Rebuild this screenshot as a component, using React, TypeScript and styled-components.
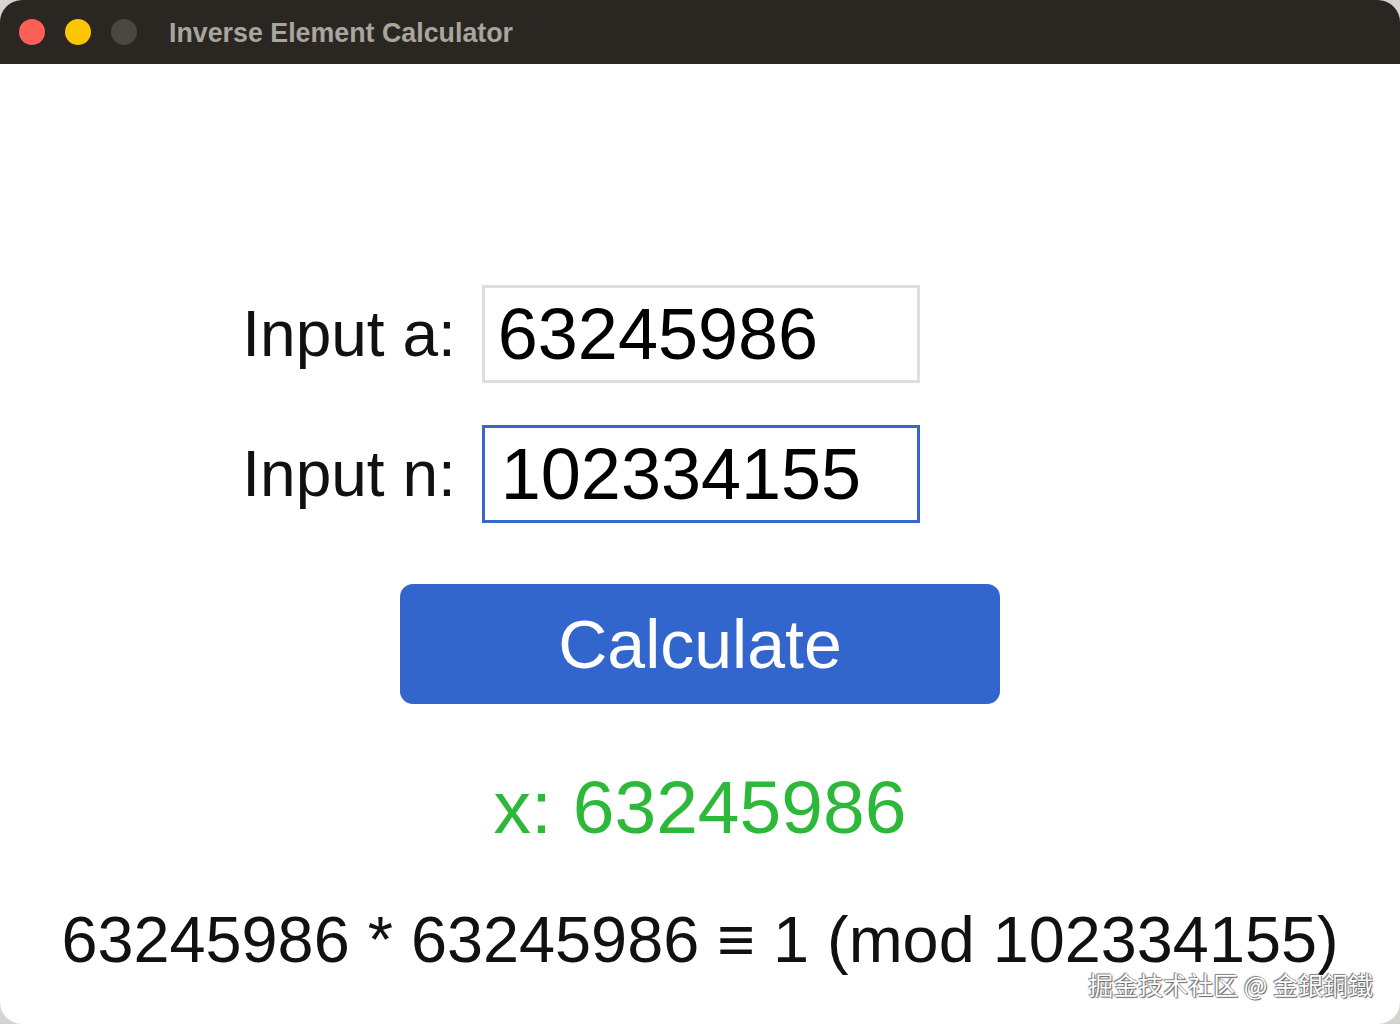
import * as React from "react";
import styled, { createGlobalStyle } from "styled-components";

const GlobalStyle = createGlobalStyle`
  html, body {
    margin: 0;
    padding: 0;
    background: #d6d4d0;
  }
  body {
    font-family: "Liberation Sans", Arial, sans-serif;
  }
`;

const Window = styled.div`
  width: 1400px;
  height: 1024px;
  display: flex;
  flex-direction: column;
  background: #ffffff;
  border-radius: 22px;
  overflow: hidden;
  position: relative;
`;

const TitleBar = styled.div`
  height: 64px;
  flex-shrink: 0;
  display: flex;
  align-items: center;
  padding-left: 19px;
  background: #2a2622;
`;

const Lights = styled.div`
  display: flex;
  gap: 20px;
  margin-right: 32px;
`;

interface ILightProps {
  color: string;
}

const Light = styled.span<ILightProps>`
  width: 26px;
  height: 26px;
  border-radius: 50%;
  background: ${props => props.color};
`;

const Title = styled.div`
  font-family: "Liberation Sans", Arial, sans-serif;
  font-weight: 700;
  font-size: 26.8px;
  color: #a9a49d;
  margin-top: 2px;
`;

const Body = styled.div`
  flex: 1;
  display: flex;
  flex-direction: column;
  align-items: center;
  padding-top: 221px;
`;

const Form = styled.div`
  display: grid;
  grid-template-columns: auto 438px;
  column-gap: 26px;
  row-gap: 42px;
  align-items: center;
  padding-right: 238px;
`;

const Label = styled.label`
  font-size: 64px;
  line-height: 64px;
  color: #111;
  text-align: right;
`;

interface IFieldProps {
  focused?: boolean;
}

const Field = styled.input<IFieldProps>`
  box-sizing: border-box;
  width: 438px;
  height: 98px;
  margin: 0;
  padding: 0 ${props => (props.focused ? "16px" : "13px")};
  font-family: "Liberation Sans", Arial, sans-serif;
  font-size: 72px;
  color: #000;
  background: #fff;
  border: 3px solid ${props => (props.focused ? "#3b66c9" : "#dedede")};
  border-radius: 0;
  outline: none;
`;

const CalcButton = styled.button`
  margin-top: 61px;
  width: 600px;
  height: 120px;
  border: none;
  border-radius: 13px;
  background: #3366cc;
  color: #ffffff;
  font-family: "Liberation Sans", Arial, sans-serif;
  font-size: 68px;
  line-height: 68px;
  padding: 0;
  cursor: pointer;
`;

const Result = styled.div`
  margin-top: 66px;
  font-size: 75px;
  line-height: 75px;
  color: #2eb83a;
`;

const Equation = styled.div`
  margin-top: 63px;
  font-size: 64.8px;
  line-height: 64px;
  color: #111;
  white-space: nowrap;
`;

const Watermark = styled.div`
  position: absolute;
  right: 27px;
  bottom: 26px;
  font-family: "Noto Sans CJK SC", "Noto Sans CJK TC", sans-serif;
  font-size: 25px;
  line-height: 28px;
  color: #ffffff;
  text-shadow: 0 0 1px #555, 1px 1px 1px #666, -1px -1px 1px #888;
`;

const App: React.FC = () => {
  const [a, setA] = React.useState("63245986");
  const [n, setN] = React.useState("102334155");
  const x = "63245986";

  return (
    <>
      <GlobalStyle />
      <Window>
        <TitleBar>
          <Lights>
            <Light color="#fe5f57" />
            <Light color="#fcc502" />
            <Light color="#4a4743" />
          </Lights>
          <Title>Inverse Element Calculator</Title>
        </TitleBar>
        <Body>
          <Form>
            <Label>Input a:</Label>
            <Field value={a} onChange={e => setA(e.target.value)} />
            <Label>Input n:</Label>
            <Field focused={true} value={n} onChange={e => setN(e.target.value)} />
          </Form>
          <CalcButton>Calculate</CalcButton>
          <Result>x: {x}</Result>
          <Equation>
            {a} * {x} ≡ 1 (mod {n})
          </Equation>
        </Body>
        <Watermark>掘金技术社区 @ 金銀銅鐵</Watermark>
      </Window>
    </>
  );
};

export default App;
